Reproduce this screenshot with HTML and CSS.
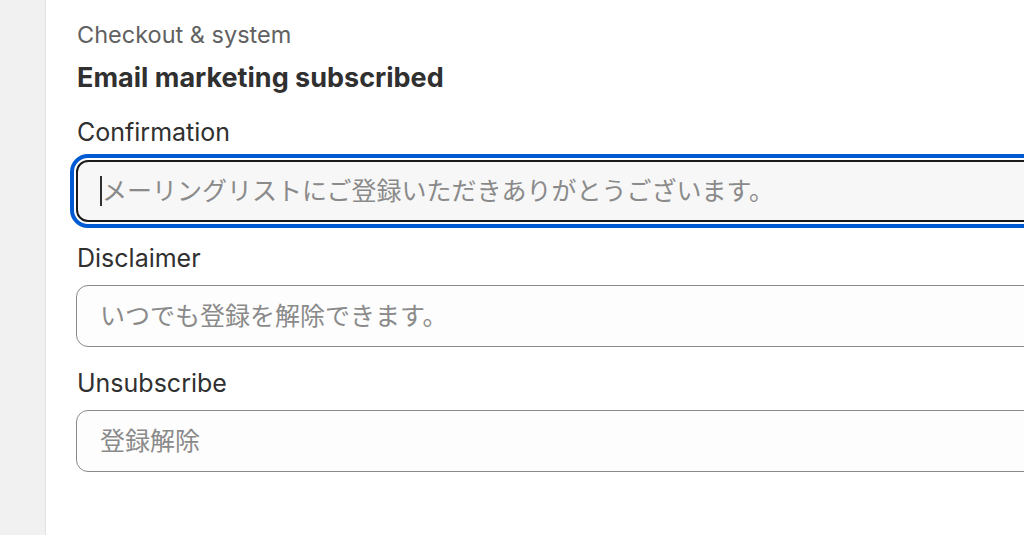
FILE: index.html
```html
<!DOCTYPE html>
<html lang="ja">
<head>
<meta charset="utf-8">
<title>Checkout &amp; system</title>
<link rel="stylesheet" href="styles.css">
</head>
<body>
<div class="layout">
  <aside class="sidebar"></aside>
  <main class="content">
    <div class="eyebrow">Checkout &amp; system</div>
    <h2 class="title">Email marketing subscribed</h2>
    <div class="field">
      <label class="label" for="f1">Confirmation</label>
      <div class="control focused">
        <span class="caret"></span>
        <input id="f1" class="input" type="text" placeholder="メーリングリストにご登録いただきありがとうございます。">
      </div>
    </div>
    <div class="field">
      <label class="label" for="f2">Disclaimer</label>
      <div class="control">
        <input id="f2" class="input" type="text" placeholder="いつでも登録を解除できます。">
      </div>
    </div>
    <div class="field">
      <label class="label" for="f3">Unsubscribe</label>
      <div class="control">
        <input id="f3" class="input" type="text" placeholder="登録解除">
      </div>
    </div>
  </main>
</div>
</body>
</html>
```

FILE: styles.css
```css
* { box-sizing: border-box; }
html, body { margin: 0; padding: 0; background: #ffffff; }
body {
  font-family: Inter, "Noto Sans CJK JP", sans-serif;
  color: #303030;
  width: 1024px;
  height: 535px;
  overflow: hidden;
}
.layout {
  display: flex;
  height: 535px;
}
.sidebar {
  width: 46px;
  flex: none;
  background: #f1f1f1;
  border-right: 1px solid #e3e3e3;
}
.content {
  flex: 1;
  padding: 21px 0 0 30px;
  min-width: 0;
  overflow: hidden;
}
.eyebrow {
  font-size: 23.5px;
  line-height: 28px;
  color: #616161;
  font-weight: 400;
  padding-left: 1px;
}
.title {
  margin: 13px 0 0;
  padding-left: 1px;
  font-size: 27px;
  line-height: 32px;
  font-weight: 700;
  color: #303030;
}
.field {
  display: flex;
  flex-direction: column;
  gap: 13px;
  margin-top: 23px;
}
.field + .field {
  margin-top: 21px;
  gap: 12px;
}
.label {
  font-size: 25px;
  line-height: 30px;
  color: #303030;
  padding-left: 1px;
}
.control {
  position: relative;
  width: calc(100% + 60px);
  height: 62px;
  border: 1px solid #8a8a8a;
  border-radius: 12px;
  background: #fdfdfd;
}
.control.focused {
  border: 2px solid #1a1a1a;
  background: #f7f7f7;
  outline: 4px solid #005bd3;
  outline-offset: 2px;
}
.input {
  width: 100%;
  height: 100%;
  border: none;
  background: transparent;
  padding: 0 0 0 23px;
  font-family: Inter, "Noto Sans CJK JP", sans-serif;
  font-size: 25px;
  color: #303030;
  outline: none;
}
.focused .input { padding-left: 24px; }
.input::placeholder { color: #8a8a8a; opacity: 1; }
.caret {
  position: absolute;
  left: 22px;
  top: 14px;
  width: 2px;
  height: 30px;
  background: #303030;
}
```
